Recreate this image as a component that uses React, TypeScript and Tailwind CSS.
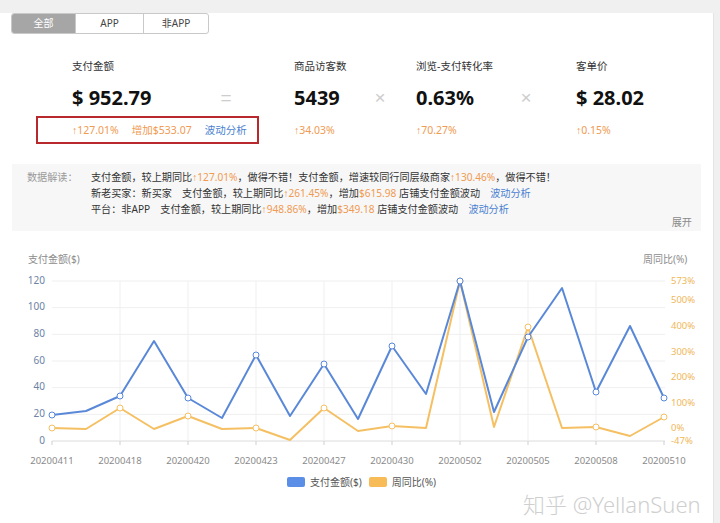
import React from "react";

// weekly pay amount vs. week-over-week ratio, positions read off the chart (page coords)
const xs = Array.from({ length: 19 }, (_, i) => 52 + i * 34);
const blueY = [415, 411, 396, 341, 398, 418, 355, 416, 364, 419, 346, 394, 281, 412, 337, 288, 392, 326, 398];
const yellowY = [428, 429, 408, 429, 416, 429, 428, 440, 408, 431, 426, 428, 281, 427, 327, 428, 427, 436, 417];

const dates = ["20200411", "20200418", "20200420", "20200423", "20200427", "20200430", "20200502", "20200505", "20200508", "20200510"];
const leftTicks = [0, 20, 40, 60, 80, 100, 120];
const rightTicks: [string, number][] = [
  ["573%", 281],
  ["500%", 300],
  ["400%", 326],
  ["300%", 352],
  ["200%", 377],
  ["100%", 403],
  ["0%", 428],
  ["-47%", 441],
];

const BLUE = "#5a88d8";
const YELLOW = "#f5c063";

function toPath(ys: number[]) {
  return ys.map((y, i) => `${i === 0 ? "M" : "L"}${xs[i]},${y}`).join(" ");
}

function Chart() {
  return (
    <svg width={714} height={234} viewBox="0 240 714 234" className="block">
      {/* axis titles */}
      <text x={28} y={260} fontSize={10} fill="#8c8c8c" dominantBaseline="middle">
        支付金额($)
      </text>
      <text x={643} y={260} fontSize={10} fill="#8c8c8c" dominantBaseline="middle">
        周同比(%)
      </text>

      {/* grid */}
      {leftTicks.map((v) => {
        const y = 441 - v * (160 / 120);
        return (
          <g key={v}>
            <line x1={52} x2={665} y1={y} y2={y} stroke={v === 0 ? "#dcdcdc" : "#efefef"} strokeWidth={1} />
            <text x={45} y={y} fontSize={10} fill="#6d83a6" textAnchor="end" dominantBaseline="middle">
              {v}
            </text>
          </g>
        );
      })}
      {dates.map((d, i) => {
        const x = 52 + i * 68;
        return (
          <g key={d}>
            {i > 0 && i < 9 && <line x1={x} x2={x} y1={281} y2={441} stroke="#efefef" strokeWidth={1} />}
            <line x1={x} x2={x} y1={441} y2={445} stroke="#cfcfcf" strokeWidth={1} />
            <text x={x} y={461} fontSize={9.5} fill="#8a8a8a" textAnchor="middle" dominantBaseline="middle">
              {d}
            </text>
          </g>
        );
      })}
      {rightTicks.map(([t, y]) => (
        <text key={t} x={671} y={y} fontSize={9.5} fill="#efb75a" dominantBaseline="middle">
          {t}
        </text>
      ))}

      {/* series */}
      <path d={toPath(yellowY)} fill="none" stroke={YELLOW} strokeWidth={2} strokeLinejoin="round" />
      <path d={toPath(blueY)} fill="none" stroke={BLUE} strokeWidth={2} strokeLinejoin="round" />
      {xs.map((x, i) =>
        i % 2 === 0 ? (
          <g key={x}>
            <circle cx={x} cy={yellowY[i]} r={3} fill="#fff" stroke={YELLOW} strokeWidth={1} />
            <circle cx={x} cy={blueY[i]} r={3} fill="#fff" stroke={BLUE} strokeWidth={1} />
          </g>
        ) : null
      )}
    </svg>
  );
}

function Metric({ label, value, children, className }: { label: string; value: string; children: React.ReactNode; className?: string }) {
  return (
    <div className={className}>
      <div className="h-[16px] leading-[16px] text-[10.5px] text-[#333]">{label}</div>
      <div className="mt-[10px] h-[28px] leading-[28px] text-[20px] font-bold text-[#111] whitespace-nowrap">{value}</div>
      <div className="mt-[10px] h-[16px] leading-[16px] text-[10.5px] whitespace-nowrap flex gap-[13px]">{children}</div>
    </div>
  );
}

function Op({ ch, className }: { ch: string; className?: string }) {
  return (
    <div className={`w-[44px] flex justify-center pt-[26px] ${className ?? ""}`}>
      <span className="h-[28px] leading-[28px] text-[19px] font-light text-[#cdcdcd] font-['Liberation_Sans',sans-serif]">{ch}</span>
    </div>
  );
}

const up = "text-[#f09a52]";
const link = "text-[#4a7fd0]";

export default function App() {
  return (
    <div className="w-[720px] h-[523px] bg-[#f0f0f0] pt-[3px] overflow-hidden font-['Noto_Sans','Liberation_Sans','Noto_Sans_CJK_SC',sans-serif]">
      <div className="relative w-[714px] h-[514px] bg-white border-r border-[#e4e4e4]">
        {/* tabs */}
        <div className="ml-[11px] mt-[10px] flex h-[21px] w-[198px] rounded-[3px] border border-[#c9c9c9] overflow-hidden text-[10px] leading-[19px]">
          <div className="w-[63px] bg-[#a6a6a6] text-white text-center">全部</div>
          <div className="w-[68px] border-l border-[#c9c9c9] text-[#444] text-center">APP</div>
          <div className="flex-1 border-l border-[#c9c9c9] text-[#444] text-center">非APP</div>
        </div>

        {/* metrics */}
        <div className="relative flex pt-[24px] pl-[72px]">
          <Metric label="支付金额" value="$ 952.79" className="w-[132px]">
            <span className={up}>↑127.01%</span>
            <span className={up}>增加$533.07</span>
            <span className={link}>波动分析</span>
          </Metric>
          <Op ch="=" />
          <Metric label="商品访客数" value="5439" className="ml-[46px] w-[64px]">
            <span className={up}>↑34.03%</span>
          </Metric>
          <Op ch="×" />
          <Metric label="浏览-支付转化率" value="0.63%" className="ml-[14px] w-[88px]">
            <span className={up}>↑70.27%</span>
          </Metric>
          <Op ch="×" />
          <Metric label="客单价" value="$ 28.02" className="ml-[28px]">
            <span className={up}>↑0.15%</span>
          </Metric>
          <div className="absolute left-[36px] top-[82px] w-[223px] h-[28px] border-2 border-[#b8292e]" />
        </div>

        {/* data reading */}
        <div className="mx-[12px] mt-[26px] bg-[#f7f7f7] pt-[5px] pb-[2px] text-[10.15px] leading-[16px] text-[#333]">
          <div className="flex">
            <div className="w-[79px] pl-[15px] text-[#9a9a9a]">数据解读：</div>
            <div className="whitespace-nowrap">
              <div>
                支付金额，较上期同比<span className={up}>↑127.01%</span>，做得不错！支付金额，增速较同行同层级商家
                <span className={up}>↑130.46%</span>，做得不错！
              </div>
              <div>
                新老买家：新买家　支付金额，较上期同比<span className={up}>↑261.45%</span>，增加
                <span className={up}>$615.98</span> 店铺支付金额波动　<span className={link}>波动分析</span>
              </div>
              <div>
                平台：非APP　支付金额，较上期同比<span className={up}>↑948.86%</span>，增加
                <span className={up}>$349.18</span> 店铺支付金额波动　<span className={link}>波动分析</span>
              </div>
            </div>
          </div>
          <div className="-mt-[2px] leading-[14px] text-right pr-[9px] text-[#8a8a8a]">展开</div>
        </div>

        {/* chart */}
        <div className="mt-[9px]">
          <Chart />
          <div className="flex items-center h-[16px] pl-[287px] text-[10px] text-[#555]">
            <span className="w-[18px] h-[10px] rounded-[2px] bg-[#5b8ee6]" />
            <span className="ml-[5px]">支付金额($)</span>
            <span className="ml-[7px] w-[18px] h-[10px] rounded-[2px] bg-[#f7bb58]" />
            <span className="ml-[5px]">周同比(%)</span>
          </div>
        </div>

        <div className="absolute left-[523px] top-[475px] text-[22px] font-light text-[#cfcfcf] whitespace-nowrap">
          知乎 @YellanSuen
        </div>
      </div>
    </div>
  );
}
